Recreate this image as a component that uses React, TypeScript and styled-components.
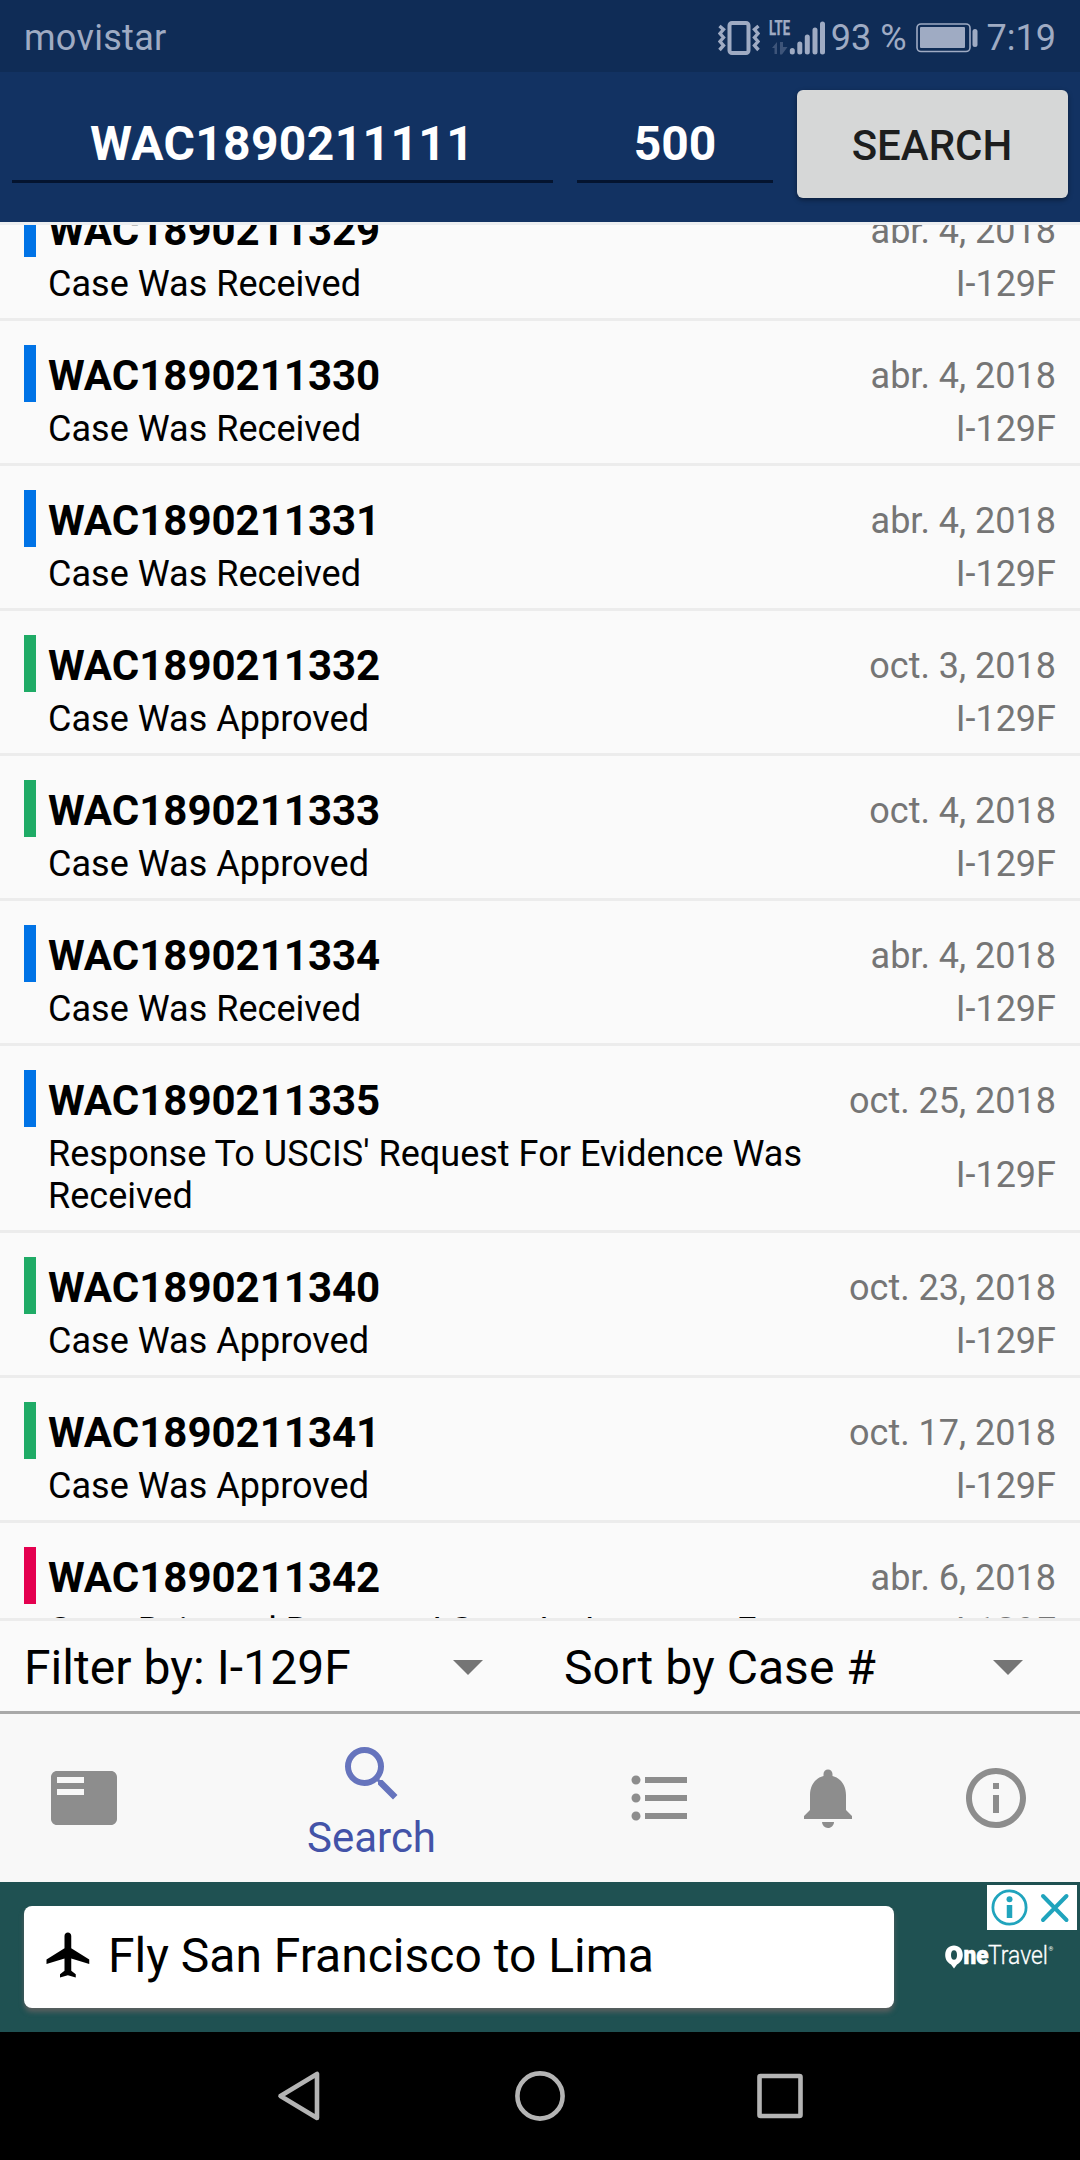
import React from "react";
import styled, { createGlobalStyle } from "styled-components";
import {
  MdFeaturedPlayList,
  MdFlight,
  MdFormatListBulleted,
  MdNotifications,
  MdOutlineInfo,
  MdSearch,
} from "react-icons/md";

const GlobalStyle = createGlobalStyle`
  * { box-sizing: border-box; }
  body { margin: 0; font-family: Roboto, "Liberation Sans", sans-serif; }
  svg { display: block; flex: none; }
`;

const Screen = styled.div`
  width: 1080px;
  height: 2160px;
  display: flex;
  flex-direction: column;
  overflow: hidden;
  background: #fafafa;
`;

const StatusBar = styled.div`
  height: 72px;
  flex: none;
  display: flex;
  align-items: center;
  padding: 3px 24px 0;
  background: #0f2c56;
  color: #9fabc3;
  font-size: 36px;
  line-height: 42px;
`;

const Carrier = styled.span`
  flex: 1;
  letter-spacing: 0.3px;
`;

const StatusIcons = styled.div`
  display: flex;
  align-items: center;
`;

const VibrateSlot = styled.div`
  margin-right: 9px;
`;

const BatterySlot = styled.div`
  margin: 0 9px;
`;

const Percent = styled.span`
  margin-left: 5px;
  white-space: nowrap;
`;

const Header = styled.header`
  height: 150px;
  flex: none;
  display: flex;
  align-items: flex-start;
  gap: 24px;
  padding: 18px 12px 0;
  background: #123262;
`;

const Field = styled.div<{ $width: number; $shift?: number }>`
  width: ${(p) => p.$width}px;
  height: 93px;
  border-bottom: 3px solid #04142f;
  padding-top: 26px;
  padding-right: ${(p) => p.$shift ?? 0}px;
  color: #fff;
  font-size: 48px;
  font-weight: 700;
  line-height: 56px;
  text-align: center;
`;

const CaseInput = styled(Field)`
  letter-spacing: 0.35px;
`;

const SearchButton = styled.button`
  width: 271px;
  height: 108px;
  border: 0;
  border-radius: 6px;
  padding: 3px 1px 0 0;
  background: #d6d7d7;
  color: #1d1e1e;
  font-family: inherit;
  font-size: 42px;
  font-weight: 500;
  box-shadow: 0 2px 5px rgba(0, 0, 0, 0.4);
`;

const CaseList = styled.main`
  height: 1396px;
  flex: none;
  overflow: hidden;
  border-top: 3px solid #eceef0;
`;

const Scrolled = styled.div`
  margin-top: -49px;
`;

const CaseRow = styled.article`
  display: grid;
  grid-template-columns: 12px 780px 1fr;
  grid-template-rows: 63px auto;
  column-gap: 12px;
  padding: 24px 24px 13px;
  border-bottom: 3px solid #ececec;
`;

const Marker = styled.div<{ $color: string }>`
  height: 57px;
  background: ${(p) => p.$color};
`;

const CaseNumber = styled.div`
  font-size: 42px;
  font-weight: 700;
  line-height: 61px;
  color: #000;
`;

const Meta = styled.div`
  align-self: center;
  justify-self: end;
  font-size: 36px;
  line-height: 42px;
  color: #757575;
  white-space: nowrap;
`;

const CaseDate = styled(Meta)`
  align-self: start;
  line-height: 63px;
`;

const CaseStatus = styled.div`
  grid-column: 2;
  font-size: 36px;
  line-height: 42px;
  letter-spacing: 0.02px;
  color: #000;
`;

const Filters = styled.div`
  height: 96px;
  flex: none;
  display: grid;
  grid-template-columns: 1fr 1fr;
  border-top: 3px solid #ececec;
  border-bottom: 3px solid #a9a9a9;
`;

const Spinner = styled.div`
  display: flex;
  align-items: center;
  justify-content: space-between;
  padding: 3px 57px 0 24px;
  font-size: 48px;
  line-height: 56px;
  letter-spacing: 0.05px;
  color: #000;
`;

const Tabs = styled.nav`
  height: 168px;
  flex: none;
  display: grid;
  grid-template-columns: 168px 408px repeat(3, 168px);
  background: #f8f8f8;
  color: #8d8d8d;
`;

const Tab = styled.div<{ $active?: boolean }>`
  display: flex;
  flex-direction: column;
  align-items: center;
  justify-content: ${(p) => (p.$active ? "flex-start" : "center")};
  padding-top: ${(p) => (p.$active ? 24 : 0)}px;
  color: ${(p) => (p.$active ? "#6674bd" : "inherit")};
`;

const TabLabel = styled.span`
  margin-top: 3px;
  padding-right: 1px;
  font-size: 42px;
  line-height: 49px;
  color: #4353a8;
`;

const Ad = styled.section`
  position: relative;
  height: 150px;
  flex: none;
  display: flex;
  align-items: center;
  padding: 0 24px;
  background: #1f5152;
`;

const AdCard = styled.div`
  width: 870px;
  height: 102px;
  display: flex;
  align-items: center;
  gap: 12px;
  padding-left: 18px;
  border-radius: 8px;
  background: #fff;
  color: #000;
  font-size: 48px;
  box-shadow: 0 4px 5px rgba(110, 100, 100, 0.75);
`;

const PlaneSlot = styled.div`
  padding-bottom: 5px;
`;

const AdText = styled.span`
  padding-bottom: 3px;
  white-space: nowrap;
`;

const Brand = styled.div`
  margin-left: 50px;
`;

const AdChoices = styled.div`
  position: absolute;
  top: 3px;
  right: 3px;
  width: 90px;
  height: 45px;
  display: flex;
  background: #fff;
`;

const SystemNav = styled.div`
  height: 128px;
  flex: none;
  display: flex;
  align-items: center;
  justify-content: center;
  gap: 180px;
  background: #000;
`;

const BLUE = "#0073e6";
const GREEN = "#1fab66";
const RED = "#e4004f";

const cases = [
  { id: "WAC1890211329", date: "abr. 4, 2018", status: "Case Was Received", color: BLUE },
  { id: "WAC1890211330", date: "abr. 4, 2018", status: "Case Was Received", color: BLUE },
  { id: "WAC1890211331", date: "abr. 4, 2018", status: "Case Was Received", color: BLUE },
  { id: "WAC1890211332", date: "oct. 3, 2018", status: "Case Was Approved", color: GREEN },
  { id: "WAC1890211333", date: "oct. 4, 2018", status: "Case Was Approved", color: GREEN },
  { id: "WAC1890211334", date: "abr. 4, 2018", status: "Case Was Received", color: BLUE },
  {
    id: "WAC1890211335",
    date: "oct. 25, 2018",
    status: "Response To USCIS' Request For Evidence Was Received",
    color: BLUE,
  },
  { id: "WAC1890211340", date: "oct. 23, 2018", status: "Case Was Approved", color: GREEN },
  { id: "WAC1890211341", date: "oct. 17, 2018", status: "Case Was Approved", color: GREEN },
  {
    id: "WAC1890211342",
    date: "abr. 6, 2018",
    status: "Case Rejected Because I Sent An Incorrect Fee",
    color: RED,
  },
];

const VibrateIcon = () => (
  <svg width="42" height="34" viewBox="0 0 42 34" fill="none" stroke="currentColor">
    <rect x="11.500" y="2" width="19" height="30" rx="2.500" strokeWidth="4" />
    <path
      d="M1.500 5l4 3.500-3.500 4 3.500 4-3.500 4 3.500 4-4 4.500M40.500 5l-4 3.500 3.500 4-3.500 4 3.500 4-3.500 4 4 4.500"
      strokeWidth="3.400"
    />
  </svg>
);

const SignalIcon = () => (
  <svg width="57" height="36" viewBox="0 0 57 36" fill="currentColor">
    <text
      x="0"
      y="15"
      fontSize="21"
      fontWeight="700"
      stroke="currentColor"
      strokeWidth="0.400"
      textLength="21"
      lengthAdjust="spacingAndGlyphs"
    >
      LTE
    </text>
    <path d="M3 28l5-6v12H5.500v-6zM11 22h3v5h4.500L13 34.500h-2z" opacity="0.32" />
    <path
      d="M23.300 30.500v1.500M30.800 24v8M38.300 17v15M46 10v22M53.500 4v28"
      stroke="currentColor"
      strokeWidth="5"
      strokeLinecap="round"
    />
  </svg>
);

const BatteryIcon = () => (
  <svg width="62" height="30" viewBox="0 0 62 30">
    <rect x="1" y="1" width="53" height="27.500" rx="4" fill="none" stroke="currentColor" strokeWidth="1.600" />
    <rect x="4" y="4" width="45" height="21" rx="1" fill="currentColor" />
    <rect x="56.500" y="6" width="5" height="18" rx="2.500" fill="currentColor" />
  </svg>
);

const DropArrow = () => (
  <svg width="30" height="15" viewBox="0 0 30 15">
    <path d="M0 0h30L15 15z" fill="#757575" />
  </svg>
);

const BrandLogo = () => (
  <svg width="112" height="30" viewBox="0 0 112 30" fill="#fff">
    <path
      fillRule="evenodd"
      d="M10 3.500C15 3.500 18.800 7 18.800 13c0 4.500-2.300 7.500-5.800 9.500L10 26.500 7 22.500C3.500 20.500 1.200 17.500 1.200 13 1.200 7 5 3.500 10 3.500zM10 8.300C8 8.300 7 10 7 13s1 4.700 3 4.700 3-1.700 3-4.700-1-4.700-3-4.700z"
    />
    <text
      x="19.500"
      y="22"
      fontSize="25"
      fontWeight="900"
      stroke="#fff"
      strokeWidth="0.600"
      textLength="25"
      lengthAdjust="spacingAndGlyphs"
    >
      ne
    </text>
    <text
      x="44"
      y="22"
      fontSize="25.500"
      fontWeight="300"
      stroke="#fff"
      strokeWidth="0.300"
      textLength="60"
      lengthAdjust="spacingAndGlyphs"
    >
      Travel
    </text>
    <text x="104.500" y="8.500" fontSize="6">
      ®
    </text>
  </svg>
);

const ChoicesIcons = () => (
  <svg width="90" height="45" viewBox="0 0 90 45" fill="none" stroke="#20a4bd">
    <circle cx="22.500" cy="22.500" r="16.600" strokeWidth="2.800" />
    <circle cx="22.500" cy="14.300" r="3" fill="#20a4bd" stroke="none" />
    <path d="M22.500 20v13" strokeWidth="5.500" />
    <path d="M56 11l23.500 24M79.500 11L56 35" strokeWidth="4" strokeLinecap="round" />
  </svg>
);

const NavIcon = ({ children }: { children: React.ReactNode }) => (
  <svg width="60" height="60" viewBox="0 0 60 60" fill="none" stroke="#b4b4b4" strokeWidth="4.600" strokeLinejoin="round">
    {children}
  </svg>
);

export default function App() {
  return (
    <Screen>
      <GlobalStyle />
      <StatusBar>
        <Carrier>movistar</Carrier>
        <StatusIcons>
          <VibrateSlot>
            <VibrateIcon />
          </VibrateSlot>
          <SignalIcon />
          <Percent>93 %</Percent>
          <BatterySlot>
            <BatteryIcon />
          </BatterySlot>
          <span>7:19</span>
        </StatusIcons>
      </StatusBar>

      <Header>
        <CaseInput $width={541} $shift={1}>
          WAC1890211111
        </CaseInput>
        <Field $width={196}>500</Field>
        <SearchButton>SEARCH</SearchButton>
      </Header>

      <CaseList>
        <Scrolled>
          {cases.map((c) => (
            <CaseRow key={c.id}>
              <Marker $color={c.color} />
              <CaseNumber>{c.id}</CaseNumber>
              <CaseDate>{c.date}</CaseDate>
              <CaseStatus>{c.status}</CaseStatus>
              <Meta>I-129F</Meta>
            </CaseRow>
          ))}
        </Scrolled>
      </CaseList>

      <Filters>
        <Spinner>
          Filter by: I-129F
          <DropArrow />
        </Spinner>
        <Spinner>
          Sort by Case #
          <DropArrow />
        </Spinner>
      </Filters>

      <Tabs>
        <Tab>
          <MdFeaturedPlayList size={72} />
        </Tab>
        <Tab $active>
          <MdSearch size={72} />
          <TabLabel>Search</TabLabel>
        </Tab>
        <Tab>
          <MdFormatListBulleted size={72} />
        </Tab>
        <Tab>
          <MdNotifications size={72} />
        </Tab>
        <Tab>
          <MdOutlineInfo size={72} />
        </Tab>
      </Tabs>

      <Ad>
        <AdCard>
          <PlaneSlot>
            <MdFlight size={54} />
          </PlaneSlot>
          <AdText>Fly San Francisco to Lima</AdText>
        </AdCard>
        <Brand>
          <BrandLogo />
        </Brand>
        <AdChoices>
          <ChoicesIcons />
        </AdChoices>
      </Ad>

      <SystemNav>
        <NavIcon>
          <path d="M10.500 30L47 8v44z" />
        </NavIcon>
        <NavIcon>
          <circle cx="30" cy="30" r="22.600" />
        </NavIcon>
        <NavIcon>
          <rect x="9.500" y="10" width="41" height="40" rx="1" />
        </NavIcon>
      </SystemNav>
    </Screen>
  );
}
